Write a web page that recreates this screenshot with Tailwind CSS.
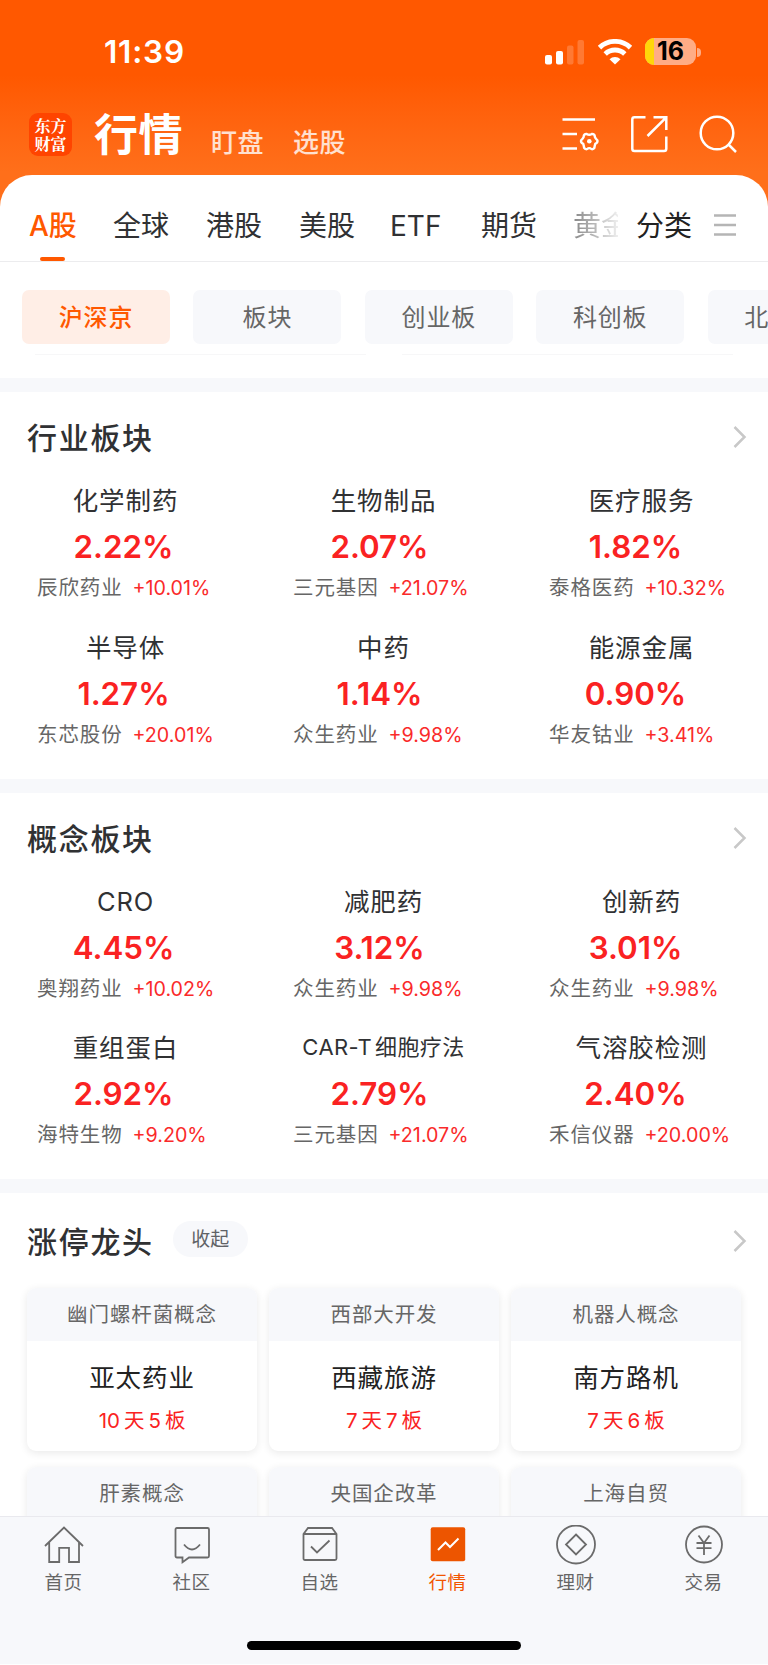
<!DOCTYPE html>
<html lang="zh-CN">
<head>
    <meta charset="UTF-8">
    <title>行情</title>
    <script src="https://cdn.jsdelivr.net/npm/@tailwindcss/browser@4"></script>
</head>
<body class="bg-white font-['Inter','Noto_Sans_CJK_SC',sans-serif] text-[#303133]">
    <div class="relative w-[768px] h-[1665px] overflow-hidden flex flex-col">

        <!-- Header -->
        <header class="shrink-0 h-[215px] -mb-10 bg-linear-to-b from-[#ff5800] from-35% to-[#ff6f1a] to-80% text-white">
            <div class="h-[104px] flex items-center justify-between pl-[104px] pr-[67px]">
                <span class="text-[31.500px] font-semibold leading-none tracking-[0.8px]">11:39</span>
                <div class="flex items-center">
                    <svg class="w-[40px] h-[26px]" viewBox="0 0 40 26" fill="#fff">
                        <rect x="0" y="16" width="7" height="9.5" rx="2"/>
                        <rect x="11" y="12" width="7" height="13.5" rx="2"/>
                        <rect x="22" y="6.500" width="6.500" height="19" rx="2" opacity=".2"/>
                        <rect x="32.500" y="1" width="6.500" height="24.500" rx="2" opacity=".2"/>
                    </svg>
                    <svg class="w-[36px] h-[26px] ml-3" viewBox="0 0 36 26" fill="none" stroke="#fff" stroke-width="4.900">
                        <path d="M2.500 9.200A22.500 22.500 0 0 1 33.500 9.200" transform="translate(0 -.6)"/>
                        <path d="M8.200 15.300A14.200 14.200 0 0 1 27.800 15.300" transform="translate(0 -.4)"/>
                        <path d="M12.500 20.300A8 8 0 0 1 23.500 20.300L18 25.500Z" fill="#fff" stroke="none"/>
                    </svg>
                    <div class="relative ml-[12px] mt-[-1px] w-[51px] h-[27px] rounded-[9px] bg-[#ffac85] overflow-hidden flex items-center justify-center">
                        <div class="absolute left-0 top-0 w-[9px] h-full bg-[#ffd60a]"></div>
                        <span class="relative text-black text-[25px] font-bold leading-none">16</span>
                    </div>
                    <div class="w-[4px] h-[9px] ml-px rounded-r-full bg-[#ffac85]"></div>
                </div>
            </div>
            <div class="h-[61px] flex items-center pl-[29px] pr-[31px]">
                <div class="w-[43px] h-[43px] rounded-[9px] bg-[#ff4400] flex flex-col items-center justify-center text-[16px] leading-[18px] font-bold font-['Noto_Serif_CJK_SC','Noto_Sans_CJK_SC',serif]">
                    <span>东方</span><span>财富</span>
                </div>
                <div class="ml-[22px] flex items-center">
                    <h1 class="text-[44px] leading-[60px] tracking-[0.5px] font-bold">行情</h1>
                    <span class="ml-[28px] mt-[15px] text-[26px] tracking-[0.5px] font-medium text-white/80">盯盘</span>
                    <span class="ml-[29px] mt-[15px] text-[26px] tracking-[0.5px] font-medium text-white/80">选股</span>
                </div>
                <svg class="ml-auto -mt-[2px] w-[38px] h-[38px]" viewBox="0 0 38 38" fill="none" stroke="#fff" stroke-width="2.500">
                    <path d="M0.500 4.500H33M0.500 19H15M0.500 33.500H15"/>
                    <path d="M24.500 17.500Q27.500 19.300 30.500 17.500Q34 17.300 34 21Q34.800 23.300 37 25Q37.500 27.500 34.500 29Q33.800 31 33.500 33.500Q31.500 36.500 28.800 34.300Q27.500 33.600 26.200 34.300Q23.500 36.500 21.500 33.500Q21.200 31 20.500 29Q17.500 27.500 18 25Q20.200 23.300 21 21Q21 17.300 24.500 17.500Z" transform="translate(3.600 3.900) scale(.86)" stroke-width="2.800"/>
                    <circle cx="27.300" cy="26.300" r="2.300" fill="#fff" stroke="none"/>
                </svg>
                <svg class="ml-[30px] -mt-[2px] w-[38px] h-[38px]" viewBox="0 0 38 38" fill="none" stroke="#fff" stroke-width="2.500">
                    <path d="M15.500 2.300H4.500Q2.300 2.300 2.300 4.500V33.700Q2.300 36 4.500 36H34Q36.300 36 36.300 33.700V21.500"/>
                    <path d="M23.500 2.300H36.300V15M36 2.600L17.500 21"/>
                </svg>
                <svg class="ml-[31px] -mt-[2px] w-[38px] h-[38px]" viewBox="0 0 38 38" fill="none" stroke="#fff" stroke-width="2.500">
                    <circle cx="18" cy="18" r="16.300"/>
                    <path d="M29.500 29.500L37 37"/>
                </svg>
            </div>
        </header>

        <!-- Market tabs -->
        <nav class="relative shrink-0 h-[87px] rounded-t-[32px] bg-white border-b border-[#ececee] flex text-[28px] leading-[103px]">
            <div class="w-[618px] pl-[29px] flex overflow-hidden whitespace-nowrap">
                <div class="relative shrink-0 w-[84px] font-medium text-[#ff5800]">A股
                    <div class="absolute left-[11px] top-[82px] w-[25px] h-[4px] rounded-full bg-[#ff5800]"></div>
                </div>
                <span class="shrink-0 w-[93px]">全球</span>
                <span class="shrink-0 w-[93px]">港股</span>
                <span class="shrink-0 w-[91px]">美股</span>
                <span class="shrink-0 w-[91px]">ETF</span>
                <span class="shrink-0 w-[92px]">期货</span>
                <span class="shrink-0 bg-linear-to-r from-[#888] to-[#eee] to-80% bg-clip-text text-transparent">黄金</span>
            </div>
            <span class="ml-[18px] text-[#222]">分类</span>
            <svg class="ml-[22px] mt-[38px] w-[22px] h-[24px]" viewBox="0 0 22 24" stroke="#b5b5b5" stroke-width="2.500">
                <path d="M0 2.500H22M0 12H22M0 21.500H22"/>
            </svg>
        </nav>

        <!-- Sub market chips -->
        <div class="shrink-0 h-[116px] pt-7 overflow-hidden">
            <div id="chips" class="flex gap-[23.4px] pl-[22px]"></div>
            <div class="flex gap-9 pl-[35px] mt-[10px]">
                <div class="w-[331px] h-px bg-[#f7f7f8]"></div>
                <div class="w-[331px] h-px bg-[#f7f7f8]"></div>
            </div>
        </div>

        <div id="sections" class="shrink-0"></div>

        <!-- Limit-up leaders -->
        <section class="shrink-0 border-t-[14px] border-[#f7f8fb]">
            <div class="h-[95px] flex items-center pl-[27px] pr-[21px]">
                <h2 class="mt-[3px] text-[30px] tracking-[1.7px] font-medium">涨停龙头</h2>
                <button class="ml-[19px] mb-[3px] w-[75px] h-[36px] pt-[2px] rounded-full bg-[#f7f8fb] text-[19px] text-[#606266]">收起</button>
                <svg class="ml-auto w-[14px] h-[24px]" viewBox="0 0 14 24" fill="none" stroke="#c8c8c8" stroke-width="2.500"><path d="M1.500 2L11.500 12L1.500 22"/></svg>
            </div>
            <div id="leaders" class="grid grid-cols-3 gap-x-3 gap-y-[15.500px] px-[27px]"></div>
        </section>

        <!-- Bottom tab bar -->
        <footer class="absolute inset-x-0 bottom-px h-[148px] bg-[#f7f8fb] border-t border-[#e9e9ee]">
            <div class="grid grid-cols-6 pt-[8px] text-[18.500px] leading-[34px] tracking-[0.6px] text-[#666]">
                <div class="flex flex-col items-center">
                    <svg class="w-[40px] h-[40px]" viewBox="0 0 40 40" fill="none" stroke="#6b6b6b" stroke-width="1.800">
                        <path d="M1 21L20 2.500L39 21M5.200 17.500V37H15.200V22.800H25V37H35V17.500"/>
                    </svg>
                    <span class="-ml-px">首页</span>
                </div>
                <div class="flex flex-col items-center">
                    <svg class="w-[40px] h-[40px]" viewBox="0 0 40 40" fill="none" stroke="#6b6b6b" stroke-width="1.800">
                        <path d="M5 3H35.500Q37 3 37 4.500V31Q37 32.500 35.500 32.500H17L10.500 37.200V32.500H5Q3.500 32.500 3.500 31V4.500Q3.500 3 5 3Z"/>
                        <path d="M12 19.500Q20 29.500 28 19.500"/>
                    </svg>
                    <span class="-ml-px">社区</span>
                </div>
                <div class="flex flex-col items-center">
                    <svg class="w-[40px] h-[40px]" viewBox="0 0 40 40" fill="none" stroke="#6b6b6b" stroke-width="1.800">
                        <path d="M3.500 9L8 3H32L36.500 9V33.500Q36.500 35 35 35H5Q3.500 35 3.500 33.500ZM3.500 9H36.500"/>
                        <path d="M11 21.500L17 27.500L29.500 15.500"/>
                    </svg>
                    <span class="-ml-px">自选</span>
                </div>
                <div class="flex flex-col items-center text-[#f25500]">
                    <svg class="w-[40px] h-[40px]" viewBox="0 0 40 40" fill="none">
                        <rect x="2.700" y="2.200" width="34.500" height="34" rx="2" fill="#ed5500"/>
                        <path d="M10 25L17.500 17.500L22 22L30.500 13.500" stroke="#fff" stroke-width="2"/>
                    </svg>
                    <span class="-ml-px">行情</span>
                </div>
                <div class="flex flex-col items-center">
                    <svg class="w-[40px] h-[40px]" viewBox="0 0 40 40" fill="none" stroke="#6b6b6b" stroke-width="1.800">
                        <circle cx="20" cy="19.500" r="19"/>
                        <path d="M20 9.500L30 19.500L20 29.500L10 19.500Z"/>
                    </svg>
                    <span class="-ml-px">理财</span>
                </div>
                <div class="flex flex-col items-center">
                    <svg class="w-[40px] h-[40px]" viewBox="0 0 40 40" fill="none" stroke="#6b6b6b" stroke-width="1.800">
                        <circle cx="20" cy="19.500" r="18"/>
                        <path d="M14.500 10.500L20 18L25.500 10.500M12.500 18H27.500M12.500 23.200H27.500M20 18V30"/>
                    </svg>
                    <span class="-ml-px">交易</span>
                </div>
            </div>
            <div class="mx-auto mt-[42px] w-[274px] h-[9px] rounded-full bg-black"></div>
        </footer>
    </div>

    <script>
        const chips = ['沪深京', '板块', '创业板', '科创板', '北交所'];

        const sections = [
            { title: '行业板块', items: [
                ['化学制药', '2.22%', '辰欣药业', '+10.01%'],
                ['生物制品', '2.07%', '三元基因', '+21.07%'],
                ['医疗服务', '1.82%', '泰格医药', '+10.32%'],
                ['半导体', '1.27%', '东芯股份', '+20.01%'],
                ['中药', '1.14%', '众生药业', '+9.98%'],
                ['能源金属', '0.90%', '华友钴业', '+3.41%'],
            ] },
            { title: '概念板块', items: [
                ['CRO', '4.45%', '奥翔药业', '+10.02%'],
                ['减肥药', '3.12%', '众生药业', '+9.98%'],
                ['创新药', '3.01%', '众生药业', '+9.98%'],
                ['重组蛋白', '2.92%', '海特生物', '+9.20%'],
                ['CAR-T<span class="ml-[3px]">细胞疗法</span>', '2.79%', '三元基因', '+21.07%'],
                ['气溶胶检测', '2.40%', '禾信仪器', '+20.00%'],
            ] },
        ];

        // concept, stock, days, boards
        const leaders = [
            ['幽门螺杆菌概念', '亚太药业', 10, 5],
            ['西部大开发', '西藏旅游', 7, 7],
            ['机器人概念', '南方路机', 7, 6],
            ['肝素概念'],
            ['央国企改革'],
            ['上海自贸'],
        ];

        const nameOffset = ['ml-0', 'ml-[2px]', 'ml-[4px]'];

        document.getElementById('chips').innerHTML = chips.map((name, i) => `
            <div class="shrink-0 w-[148px] h-[54px] pt-[2px] rounded-[7px] flex items-center justify-center text-[24px] tracking-[0.8px] ${i === 0 ? 'bg-[#ffeee6] text-[#ff5800] font-medium' : 'bg-[#f7f8fb] text-[#666]'}">${name}</div>
        `).join('');

        document.getElementById('sections').innerHTML = sections.map(section => `
            <section class="h-[400.500px] border-t-[14px] border-[#f7f8fb]">
                <div class="h-[85px] pt-[6px] flex items-center pl-[27px] pr-[21px]">
                    <h2 class="mt-[2px] text-[30px] tracking-[1.7px] font-medium">${section.title}</h2>
                    <svg class="ml-auto -mt-px w-[14px] h-[24px]" viewBox="0 0 14 24" fill="none" stroke="#c8c8c8" stroke-width="2.500"><path d="M1.500 2L11.500 12L1.500 22"/></svg>
                </div>
                <div class="grid grid-cols-3">
                    ${section.items.map(([name, change, stock, stockChange], i) => `
                        <div class="h-[146.500px] whitespace-nowrap">
                            <div class="h-[46px] leading-[47px] w-[251px] text-center ${nameOffset[i % 3]} ${name.length > 6 ? 'text-[22px] tracking-[0.4px]' : 'text-[25.500px] tracking-[0.9px]'}">${name}</div>
                            <div class="h-[48px] leading-[48px] w-[247px] text-center text-[31.300px] font-semibold text-[#fa2222]">${change}</div>
                            <div class="h-[32px] leading-[34px] pl-[37px] flex text-[19.700px]">
                                <span class="w-[95.500px] text-[20.500px] tracking-[0.9px] text-[#666]">${stock}</span>
                                <span class="text-[#fa2a2a]">${stockChange}</span>
                            </div>
                        </div>
                    `).join('')}
                </div>
            </section>
        `).join('');

        document.getElementById('leaders').innerHTML = leaders.map(([concept, stock, days, boards]) => `
            <div class="h-[163px] rounded-[9px] overflow-hidden bg-white text-center shadow-[0_2px_9px_rgba(0,0,0,0.09)]">
                <div class="h-[53px] leading-[54px] bg-[#f7f8fb] text-[20.500px] tracking-[0.9px] text-[#666]">${concept}</div>
                ${stock ? `
                    <div class="h-[72px] leading-[73px] text-[25.500px] tracking-[0.9px] text-[#222]">${stock}</div>
                    <div class="h-[16px] leading-[16px] text-[20.500px] text-[#fa2222]">${days}<span class="mx-[4px]">天</span>${boards}<span class="ml-[4px]">板</span></div>
                ` : ''}
            </div>
        `).join('');
    </script>
</body>
</html>
